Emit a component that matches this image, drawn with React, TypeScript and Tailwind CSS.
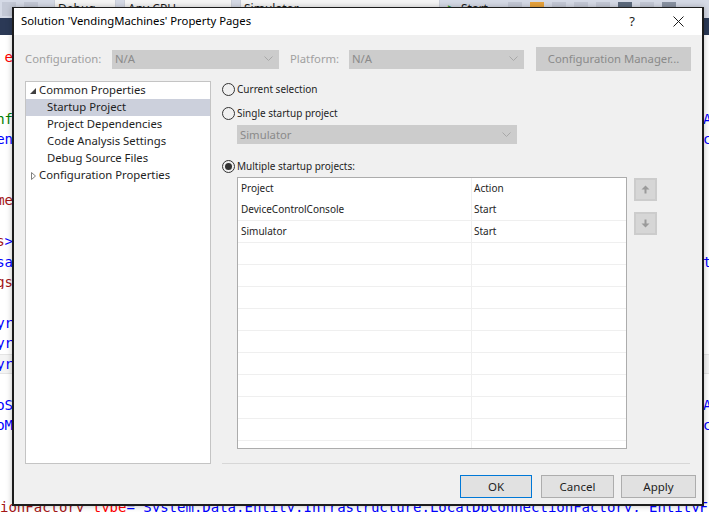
import React from "react";

const Chevron = () => (
  <svg width="9" height="6" viewBox="0 0 9 6" className="shrink-0">
    <polyline points="0.5,0.5 4.5,4.5 8.5,0.5" fill="none" stroke="#a8a8a8" strokeWidth="1" />
  </svg>
);

function Combo({ w, text }: { w: string; text: string }) {
  return (
    <div className={`${w} h-[19px] bg-[#cccccc] flex items-center justify-between pl-[3px] pr-[6px]`}>
      <span className="text-[#8a8a8a] text-[11.3px] leading-none">{text}</span>
      <Chevron />
    </div>
  );
}

function Radio({ checked, label }: { checked?: boolean; label: string }) {
  return (
    <div className="h-[16px] flex items-center gap-[2px]">
      <span className="w-[13px] h-[13px] rounded-full border border-[#333333] flex items-center justify-center shrink-0">
        {checked && <span className="w-[7px] h-[7px] rounded-full bg-[#333333]" />}
      </span>
      <span className="text-[10px] text-[#1e1e1e] leading-none">{label}</span>
    </div>
  );
}

function ArrowBtn({ up }: { up?: boolean }) {
  return (
    <div className="w-[23px] h-[23px] bg-[#d6d6d6] border-2 border-[#cccccc] flex items-center justify-center">
      <svg width="9" height="9" viewBox="0 0 9 9" className={up ? "" : "rotate-180"}>
        <path d="M4.5 0.5 L8.5 4.5 H5.5 V8.5 H3.5 V4.5 H0.5 Z" fill="#9a9a9a" />
      </svg>
    </div>
  );
}

function Btn({ w, label, def }: { w: string; label: string; def?: boolean }) {
  return (
    <div
      className={`${w} h-[23px] bg-[#e1e1e1] border ${def ? "border-[#0078d7]" : "border-[#adadad]"} flex items-center justify-center text-[11.5px] text-[#1e1e1e]`}
    >
      {label}
    </div>
  );
}

type Frag = { t: string; c: string }[];
const lines: { l?: Frag; r?: Frag; band?: boolean }[] = [
  { l: [{ t: "e", c: "#ff0000" }] },
  {},
  {},
  { l: [{ t: "nf", c: "#008000" }], r: [{ t: "A", c: "#0000ff" }] },
  { l: [{ t: "en", c: "#0000ff" }], r: [{ t: "c", c: "#0000ff" }] },
  {},
  {},
  { l: [{ t: "me", c: "#a31515" }] },
  {},
  { l: [{ t: "s", c: "#a31515" }, { t: ">", c: "#0000ff" }] },
  { l: [{ t: "sa", c: "#0000ff" }], r: [{ t: "t", c: "#0000ff" }] },
  { l: [{ t: "gs", c: "#a31515" }] },
  {},
  { l: [{ t: "yr", c: "#0000ff" }] },
  { l: [{ t: "yr", c: "#0000ff" }] },
  { l: [{ t: "yr", c: "#0000ff" }], band: true },
  {},
  { l: [{ t: "oS", c: "#0000ff" }], r: [{ t: "A", c: "#0000ff" }] },
  { l: [{ t: "oM", c: "#0000ff" }], r: [{ t: "c", c: "#0000ff" }] },
  {},
  {},
  {},
];

function Background() {
  return (
    <div className="w-[709px] h-[512px] flex flex-col bg-white overflow-hidden font-['DejaVu_Sans_Mono',monospace]">
      {/* toolbar */}
      <div className="h-[18px] bg-[#d5dae6] flex items-center gap-[8px] pl-[2px] shrink-0 font-['Noto_Sans',sans-serif] text-[12px] text-[#1e1e1e]">
        <div className="w-[14px] h-[14px] bg-[#c4c9d6]" />
        <div className="w-[14px] h-[14px] bg-[#c4c9d6]" />
        <div className="ml-[8px] w-[62px] h-[20px] bg-[#f5f5f5] border border-[#ccd0da] flex items-center justify-between px-[3px]">
          <span>Debug</span>
          <span className="text-[8px]">▼</span>
        </div>
        <div className="w-[108px] h-[20px] bg-[#f5f5f5] border border-[#ccd0da] flex items-center justify-between px-[3px]">
          <span>Any CPU</span>
          <span className="text-[8px]">▼</span>
        </div>
        <div className="w-[200px] h-[20px] bg-[#f5f5f5] border border-[#ccd0da] flex items-center justify-between px-[3px]">
          <span>Simulator</span>
          <span className="text-[8px]">▼</span>
        </div>
        <div className="flex items-center gap-[4px]">
          <span className="text-[#2e9b2e] text-[12px]">▶</span>
          <span>Start</span>
          <span className="text-[8px]">▼</span>
        </div>
        <div className="w-[14px] h-[14px] bg-[#c4c9d6]" />
        <div className="w-[14px] h-[14px] bg-[#e8a33c]" />
        <div className="w-[14px] h-[14px] bg-[#c4c9d6]" />
        <div className="w-[14px] h-[14px] bg-[#c4c9d6]" />
        <div className="w-[14px] h-[14px] bg-[#c4c9d6]" />
        <div className="w-[14px] h-[14px] bg-[#5d6b7e]" />
        <div className="w-[14px] h-[14px] bg-[#c4c9d6]" />
        <div className="w-[14px] h-[14px] bg-[#8a93a3]" />
      </div>
      {/* tab well */}
      <div className="h-[17px] bg-[#2b3956] shrink-0" />
      {/* editor */}
      <div className="flex-1 pt-[12px] text-[14px]">
        {lines.map((ln, i) => (
          <div
            key={i}
            className={`h-[20.45px] flex items-center justify-between ${ln.band ? "bg-[#f4f4f4] border-y border-[#e4e4e4]" : ""}`}
          >
            <div className="w-[13px] overflow-hidden flex justify-end whitespace-pre leading-none">
              {ln.l?.map((f, j) => (
                <span key={j} style={{ color: f.c }}>
                  {f.t}
                </span>
              ))}
            </div>
            <div className="w-[6px] overflow-hidden flex justify-start whitespace-pre leading-none">
              {ln.r?.map((f, j) => (
                <span key={j} style={{ color: f.c }}>
                  {f.t}
                </span>
              ))}
            </div>
          </div>
        ))}
        <div className="h-[20.45px] flex items-center whitespace-pre leading-none">
          <span className="text-[#a31515]">ionFactory</span>
          <span> </span>
          <span className="text-[#ff0000]">type</span>
          <span className="text-[#0000ff]">="System.Data.Entity.Infrastructure.LocalDbConnectionFactory, EntityFramework"</span>
        </div>
      </div>
    </div>
  );
}

export default function App() {
  return (
    <div className="relative w-[709px] h-[512px] overflow-hidden">
      <Background />
      <div className="absolute left-[12px] top-[7px] w-[692px] h-[499px] border-x-2 border-b-2 border-t border-[#1c1c1c] bg-[#f0f0f0] flex flex-col font-['Noto_Sans',sans-serif] shadow-[0_0_6px_rgba(0,0,0,0.25)]">
        {/* title bar */}
        <div className="h-[27px] bg-white flex items-center pl-[7px] pr-[18px] shrink-0">
          <span className="text-[11.3px] text-[#000000]">Solution 'VendingMachines' Property Pages</span>
          <span className="ml-auto text-[13px] text-[#1a1a1a] mr-[38px]">?</span>
          <svg width="11" height="11" viewBox="0 0 11 11">
            <line x1="0.5" y1="0.5" x2="10.5" y2="10.5" stroke="#1a1a1a" strokeWidth="1" />
            <line x1="10.5" y1="0.5" x2="0.5" y2="10.5" stroke="#1a1a1a" strokeWidth="1" />
          </svg>
        </div>

        {/* config row */}
        <div className="mt-[12px] h-[24px] pl-[11px] flex items-center shrink-0">
          <span className="w-[87px] text-[11.3px] text-[#a0a0a0]">Configuration:</span>
          <Combo w="w-[167px]" text="N/A" />
          <span className="ml-[11px] w-[59px] text-[11.3px] text-[#a0a0a0]">Platform:</span>
          <Combo w="w-[175px]" text="N/A" />
          <div className="ml-[12px] w-[155px] h-[24px] bg-[#cccccc] flex items-center justify-center text-[11.3px] text-[#8a8a8a]">
            Configuration Manager...
          </div>
        </div>

        {/* main area */}
        <div className="mt-[10px] pl-[11px] flex shrink-0">
          <div className="w-[186px] h-[383px] bg-white border border-[#c4c4c4] text-[11.3px] text-[#1e1e1e]">
            <div className="h-[17px] flex items-center pl-[4px] gap-[3px]">
              <svg width="6" height="6" viewBox="0 0 6 6">
                <path d="M6 0 L6 6 L0 6 Z" fill="#404040" />
              </svg>
              <span>Common Properties</span>
            </div>
            <div className="h-[17px] flex items-center pl-[21px] bg-[#ccd0dc]">Startup Project</div>
            <div className="h-[17px] flex items-center pl-[21px]">Project Dependencies</div>
            <div className="h-[17px] flex items-center pl-[21px]">Code Analysis Settings</div>
            <div className="h-[17px] flex items-center pl-[21px]">Debug Source Files</div>
            <div className="h-[17px] flex items-center pl-[5px] gap-[3px]">
              <svg width="5" height="8" viewBox="0 0 5 8">
                <path d="M0.5 0.5 L4.5 4 L0.5 7.5 Z" fill="none" stroke="#808080" strokeWidth="1" />
              </svg>
              <span>Configuration Properties</span>
            </div>
          </div>

          <div className="ml-[11px] w-[468px] h-[383px] flex flex-col">
            <Radio label="Current selection" />
            <div className="mt-[8px]">
              <Radio label="Single startup project" />
            </div>
            <div className="mt-[4px] ml-[15px]">
              <Combo w="w-[280px]" text="Simulator" />
            </div>
            <div className="mt-[14px]">
              <Radio checked label="Multiple startup projects:" />
            </div>
            <div className="mt-[3px] ml-[15px] flex">
              <div className="w-[390px] h-[272px] bg-white border border-[#acacac] overflow-hidden text-[10px] text-[#1e1e1e]">
                {[
                  ["Project", "Action"],
                  ["DeviceControlConsole", "Start"],
                  ["Simulator", "Start"],
                  ["", ""],
                  ["", ""],
                  ["", ""],
                  ["", ""],
                  ["", ""],
                  ["", ""],
                  ["", ""],
                  ["", ""],
                  ["", ""],
                  ["", ""],
                ].map((r, i) => (
                  <div
                    key={i}
                    className={`flex ${i === 0 ? "h-[21px]" : "h-[22px] border-b border-[#efefef]"}`}
                  >
                    <div className="w-[234px] border-r border-[#efefef] pl-[3px] flex items-center">{r[0]}</div>
                    <div className="pl-[2px] flex items-center">{r[1]}</div>
                  </div>
                ))}
              </div>
              <div className="ml-[7px] mt-[1px] flex flex-col gap-[11px]">
                <ArrowBtn up />
                <ArrowBtn />
              </div>
            </div>
            <div className="mt-auto h-px bg-[#d7d7d7]" />
          </div>
        </div>

        {/* buttons */}
        <div className="mt-[11px] pr-[6px] flex justify-end">
          <Btn w="w-[72px]" label="OK" def />
          <div className="ml-[9px]">
            <Btn w="w-[73px]" label="Cancel" />
          </div>
          <div className="ml-[7px]">
            <Btn w="w-[75px]" label="Apply" />
          </div>
        </div>
      </div>
    </div>
  );
}
